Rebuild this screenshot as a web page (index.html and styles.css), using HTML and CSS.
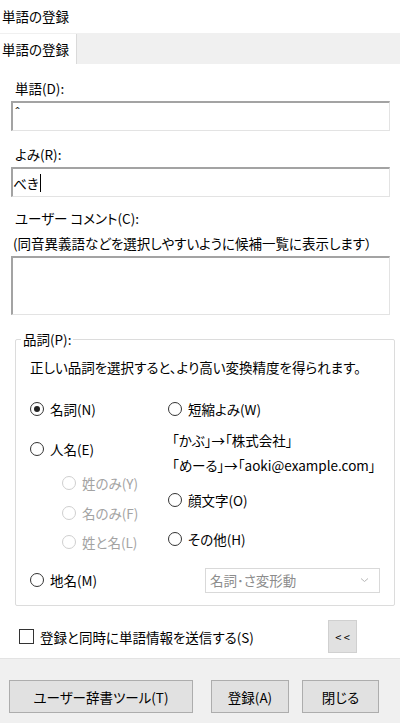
FILE: index.html
```html
<!DOCTYPE html>
<html lang="ja">
<head>
<meta charset="utf-8">
<link rel="stylesheet" href="styles.css">
</head>
<body>
<div class="window">
  <div class="title">単語の登録</div>
  <div class="tabbar"><div class="tab">単語の登録</div></div>
  <div class="panel">
    <div class="label l-word">単語(D):</div>
    <div class="input"><span class="hat">ˆ</span></div>
    <div class="label l-yomi">よみ(R):</div>
    <div class="input"><span class="val">べき</span><span class="cursor"></span></div>
    <div class="label l-comment">ユーザー コメント(C):</div>
    <div class="note">(同音異義語などを選択しやすいように候補一覧に表示します）</div>
    <div class="input textarea"></div>

    <fieldset class="group">
      <legend>品詞(P):</legend>
      <div class="hint">正しい品詞を選択すると、より高い変換精度を得られます。</div>
      <div class="cols">
        <div class="col col-left">
          <div class="opt r1"><span class="radio checked"></span>名詞(N)</div>
          <div class="opt r2"><span class="radio"></span>人名(E)</div>
          <div class="opt sub r3"><span class="radio off"></span>姓のみ(Y)</div>
          <div class="opt sub r4"><span class="radio off"></span>名のみ(F)</div>
          <div class="opt sub r5"><span class="radio off"></span>姓と名(L)</div>
        </div>
        <div class="col col-right">
          <div class="opt r1"><span class="radio"></span>短縮よみ(W)</div>
          <div class="ex ex1">「かぶ」→「株式会社」</div>
          <div class="ex ex2">「めーる」→「aoki@example.com」</div>
          <div class="opt q3"><span class="radio"></span>顔文字(O)</div>
          <div class="opt q4"><span class="radio"></span>その他(H)</div>
        </div>
      </div>
      <div class="last-row">
        <div class="opt"><span class="radio"></span>地名(M)</div>
        <div class="select">
          <span>名詞･さ変形動</span>
          <svg class="chev" width="9" height="6" viewBox="0 0 9 6"><path d="M1 1.5 L4.5 4.5 L8 1.5" fill="none" stroke="#b8b8b8" stroke-width="1"/></svg>
        </div>
      </div>
    </fieldset>

    <div class="send-row">
      <div class="check-opt"><span class="checkbox"></span>登録と同時に単語情報を送信する(S)</div>
      <div class="mini-btn">&lt; &lt;</div>
    </div>
  </div>
  <div class="footer">
    <div class="btn btn-tool">ユーザー辞書ツール(T)</div>
    <div class="btn btn-reg">登録(A)</div>
    <div class="btn btn-close">閉じる</div>
  </div>
</div>
</body>
</html>
```

FILE: styles.css
```css
* { box-sizing: border-box; }
html, body { margin: 0; padding: 0; background: #fff; }
body {
  font-family: "Noto Sans CJK JP", "Noto Sans", sans-serif;
  font-size: 13.5px;
  font-feature-settings: "palt";
  color: #000;
}
.window { width: 400px; height: 723px; display: flex; flex-direction: column; overflow: hidden; }

.title { height: 33px; line-height: 33px; padding-left: 2px; }

.tabbar { height: 31px; background: #f0f0f0; display: flex; align-items: flex-end; }
.tab {
  height: 30px; width: 77px; background: #fff;
  border-right: 1px solid #dadada;
  line-height: 30px; padding-left: 2px;
}

.panel { height: 594px; padding: 14px 10px 0 11px; display: flex; flex-direction: column; }

.label { height: 20px; line-height: 20px; padding-left: 4px; }
.l-yomi { margin-top: 13px; }
.l-comment { margin-top: 11px; }
.note { height: 20px; line-height: 20px; padding-left: 2px; margin-top: 5px; }

.input {
  height: 30px; width: 379px; margin-top: 3px;
  border: 1px solid #e3e3e3;
  border-top: 2px solid #a3a3a3;
  border-left: 2px solid #a3a3a3;
  background: #fff;
  display: flex; align-items: center;
  padding-left: 0;
}
.hat { font-size: 12px; margin-left: 2px; margin-top: -10px; color: #222; }
.val { line-height: 20px; }
.cursor { width: 1px; height: 18px; background: #000; margin-left: 1px; }
.textarea { height: 59px; margin-top: 3px; }

.group {
  margin: 16px 0 0 4px; padding: 0 14px 13px 14px;
  width: 379px;
  border: 1px solid #dcdcdc; border-radius: 2px;
}
.group legend { padding: 0 2px; margin-left: -9px; line-height: 16px; }
.hint { line-height: 20px; margin-top: 10px; }

.cols { display: flex; margin-top: 22px; }
.col { display: flex; flex-direction: column; }
.col-left { width: 138px; }
.opt { display: flex; align-items: center; height: 20px; line-height: 20px; }
.opt .radio { margin-right: 6px; }
.sub { padding-left: 32px; color: #a3a3a3; }
.col-left .r2 { margin-top: 20px; }
.col-left .r3 { margin-top: 14px; }
.col-left .r4 { margin-top: 10px; }
.col-left .r5 { margin-top: 9px; }
.ex { line-height: 20px; height: 20px; margin-left: 4px; }
.ex1 { margin-top: 11px; }
.ex2 { margin-top: 5px; }
.col-right .q3 { margin-top: 15px; }
.col-right .q4 { margin-top: 19px; }

.radio {
  display: inline-block; width: 14px; height: 14px; border-radius: 50%;
  border: 1px solid #333; background: #fff; position: relative; flex: none;
}
.radio.checked::after {
  content: ""; position: absolute; left: 3px; top: 3px; width: 6px; height: 6px;
  border-radius: 50%; background: #222;
}
.radio.off { border-color: #cfcfcf; }

.last-row { display: flex; align-items: center; margin-top: 16px; height: 24px; }
.last-row .opt { width: 175px; }
.select {
  width: 175px; height: 25px; border: 1px solid #d9d9d9; background: #fff;
  color: #8c8c8c; display: flex; align-items: center; justify-content: space-between;
  padding: 0 10px 0 4px;
}

.send-row { display: flex; align-items: center; margin-top: 14px; padding-left: 8px; }
.check-opt { display: flex; align-items: center; width: 309px; }
.checkbox { width: 15px; height: 15px; border: 1px solid #333; background: #fff; margin-right: 6px; flex: none; }
.mini-btn {
  width: 29px; height: 33px; background: #e1e1e1; border: 1px solid #d0d0d0;
  font-size: 11px; display: flex; align-items: center; justify-content: center; letter-spacing: 0;
}

.footer {
  flex: 1; background: #f0f0f0; border-top: 1px solid #e3e3e3;
  display: flex; align-items: flex-start; padding: 21px 0 0 9px;
}
.btn {
  height: 33px; background: #e1e1e1; border: 1px solid #adadad;
  display: flex; align-items: center; justify-content: center;
}
.btn-tool { width: 184px; }
.btn-reg { width: 78px; margin-left: 18px; }
.btn-close { width: 77px; margin-left: 13px; }
```
